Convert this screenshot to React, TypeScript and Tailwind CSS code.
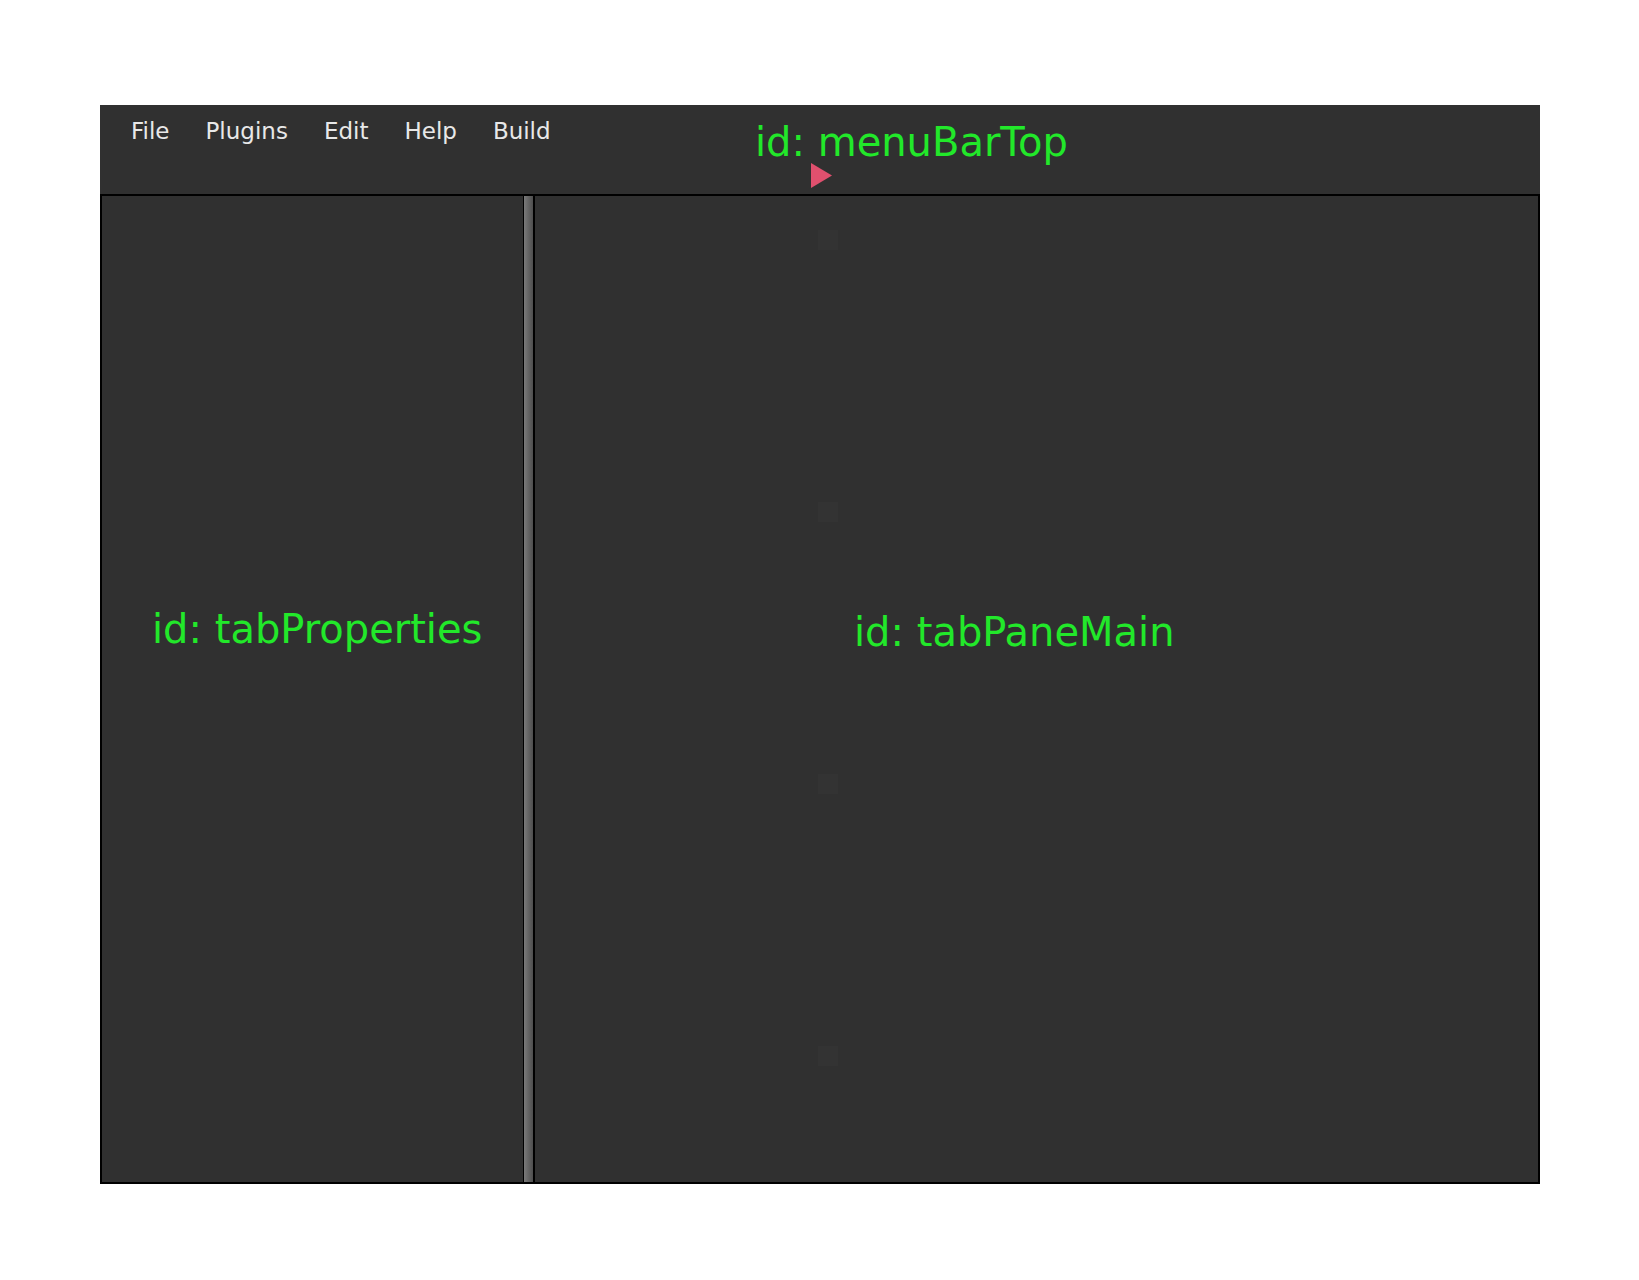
import React from 'react';

const menus = ['File', 'Plugins', 'Edit', 'Help', 'Build'];

// faint markers in the main pane
const marks = [230, 502, 774, 1046];

const App: React.FC = () => {
  return (
    <div className="w-[1639px] h-[1280px] bg-white pt-[105px] pl-[100px] font-['DejaVu_Sans',sans-serif]">
      <div className="relative w-[1440px] h-[1079px] flex flex-col bg-[#303030]">
        {/* Menu bar */}
        <div className="h-[89px] flex items-start pl-[13px] pt-[9px]">
          {menus.map((m) => (
            <span key={m} className="px-[18px] text-[23px] leading-[34px] text-[#e8e8e8]">
              {m}
            </span>
          ))}
        </div>

        {/* Body */}
        <div className="flex-1 flex border-2 border-black">
          <div className="w-[421px] bg-[#303030]" />
          <div className="w-[12px] flex">
            <div className="w-[1px] bg-black" />
            <div className="flex-1 bg-gradient-to-r from-[#7a7a7a] to-[#4e4e4e]" />
            <div className="w-[2px] bg-black" />
          </div>
          <div className="flex-1 bg-[#303030]" />
        </div>

        {/* annotation overlays */}
        <span className="absolute left-[655px] top-[13px] text-[40px] leading-[48px] text-[#22e82a]">
          id: menuBarTop
        </span>
        <svg className="absolute left-[710px] top-[58px] blur-[0.6px]" width="22" height="25" viewBox="0 0 22 25">
          <polygon points="1,0 22,12.5 1,25" fill="#e0506e" />
        </svg>
        {marks.map((y) => (
          <div key={y} className="absolute left-[718px] w-[20px] h-[20px] bg-[#333333]" style={{ top: y - 105 }} />
        ))}
        <span className="absolute left-[52px] top-[500px] text-[40px] leading-[48px] text-[#22e82a]">
          id: tabProperties
        </span>
        <span className="absolute left-[754px] top-[503px] text-[40px] leading-[48px] text-[#22e82a]">
          id: tabPaneMain
        </span>
      </div>
    </div>
  );
};

export default App;
